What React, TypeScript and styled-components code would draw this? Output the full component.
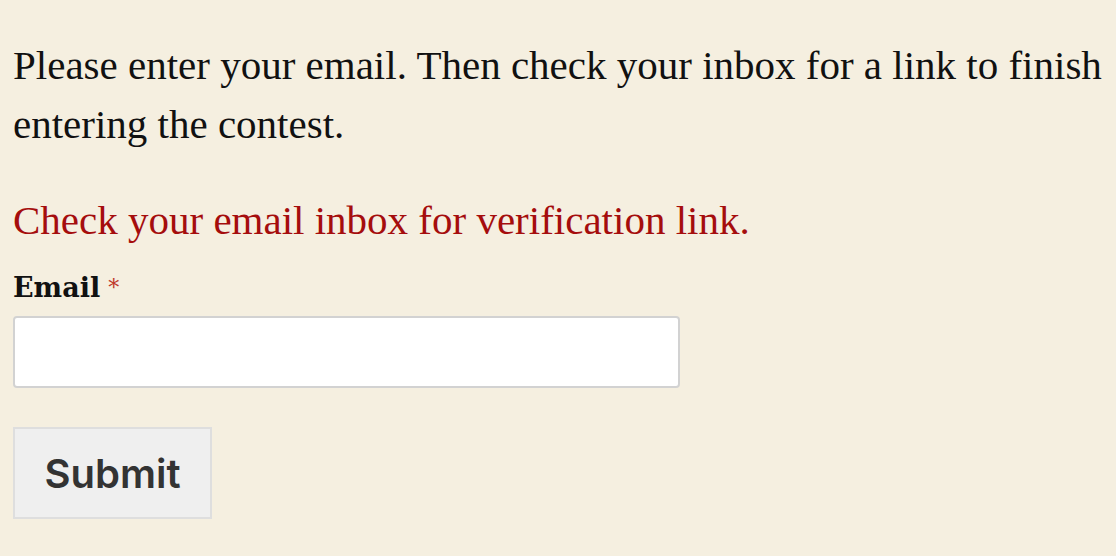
import React from "react";
import styled, { createGlobalStyle } from "styled-components";

const Global = createGlobalStyle`
  html, body { margin: 0; padding: 0; background: #f5efe0; }
  body { font-family: "Liberation Serif", "DejaVu Serif", serif; }
`;

const Page = styled.div`
  padding: 36px 13px 0 13px;
  display: flex;
  flex-direction: column;
  align-items: flex-start;
`;

const Intro = styled.p`
  margin: 0;
  font-size: 41px;
  line-height: 59px;
  color: #111;
  width: 1100px;
`;

const Notice = styled.p`
  margin: 37px 0 0 0;
  font-size: 41px;
  line-height: 59px;
  color: #a50d0d;
`;

const Label = styled.label`
  margin-top: 21px;
  font-family: "DejaVu Serif", serif;
  font-weight: bold;
  font-size: 27px;
  line-height: 34px;
  color: #111;
  display: flex;
  gap: 8px;
`;

const Required = styled.span`
  color: #c0392b;
  font-weight: normal;
  font-size: 22px;
`;

const Input = styled.input`
  margin-top: 11px;
  box-sizing: border-box;
  width: 667px;
  height: 72px;
  background: #fff;
  border: 2px solid #d2d2d2;
  border-radius: 4px;
  outline: none;
`;

const Button = styled.button`
  margin-top: 39px;
  box-sizing: border-box;
  width: 199px;
  height: 92px;
  background: #efefef;
  border: 2px solid #dedede;
  font-family: Inter, "Liberation Sans", sans-serif;
  font-weight: 600;
  font-size: 40px;
  color: #333;
  padding: 0;
`;

export default function App() {
  return (
    <>
      <Global />
      <Page>
        <Intro>
          Please enter your email. Then check your inbox for a link to finish entering the contest.
        </Intro>
        <Notice>Check your email inbox for verification link.</Notice>
        <Label>
          Email<Required>*</Required>
        </Label>
        <Input type="email" />
        <Button>Submit</Button>
      </Page>
    </>
  );
}
